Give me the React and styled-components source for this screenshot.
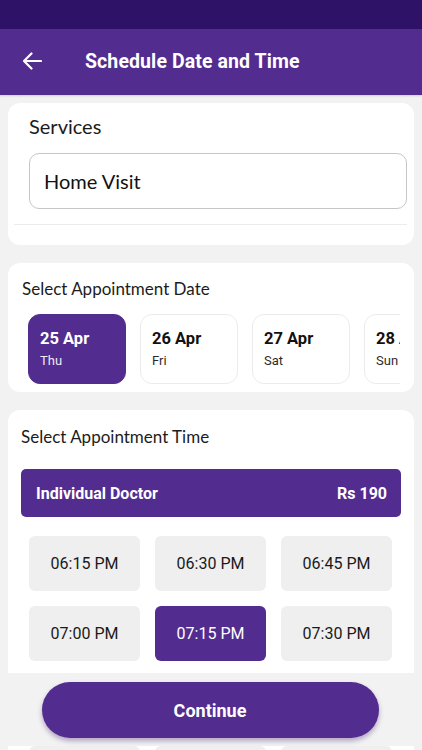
import React from "react";
import styled, { createGlobalStyle, css } from "styled-components";

const purple = "#522d8f";

const GlobalStyle = createGlobalStyle`
  * { box-sizing: border-box; }
  html, body { margin: 0; padding: 0; }
  body {
    background: #f2f2f2;
    font-family: Roboto, "Noto Sans", sans-serif;
    width: 422px;
    height: 750px;
    overflow: hidden;
  }
`;

const dates = [
  { day: "25 Apr", week: "Thu", active: true },
  { day: "26 Apr", week: "Fri" },
  { day: "27 Apr", week: "Sat" },
  { day: "28 Apr", week: "Sun" }
];

const slots = [
  "06:15 PM", "06:30 PM", "06:45 PM",
  "07:00 PM", "07:15 PM", "07:30 PM",
  "07:45 PM", "08:00 PM", "08:15 PM",
  "08:30 PM", "08:45 PM", "09:00 PM"
];

export default function App() {
  return (
    <>
      <GlobalStyle />
      <Screen>
        <StatusBar />
        <Header>
          <BackButton aria-label="back">
            <svg width="20" height="18" viewBox="0 0 20 18" fill="none">
              <path d="M19 9H2M9.5 1.5L2 9l7.5 7.5" stroke="#fff" strokeWidth="2.2" strokeLinecap="round" strokeLinejoin="round" />
            </svg>
          </BackButton>
          <HeaderTitle>Schedule Date and Time</HeaderTitle>
        </Header>

        <Content>
          <Card pad="services">
            <ServiceLabel>Services</ServiceLabel>
            <ServiceBox>Home Visit</ServiceBox>
            <Divider />
          </Card>

          <Card pad="date">
            <SectionTitle>Select Appointment Date</SectionTitle>
            <DateRow>
              {dates.map(d => (
                <DateChip key={d.day} active={d.active}>
                  <DateDay>{d.day}</DateDay>
                  <DateWeek>{d.week}</DateWeek>
                </DateChip>
              ))}
            </DateRow>
          </Card>

          <Card pad="time">
            <SectionTitle>Select Appointment Time</SectionTitle>
            <DoctorBar>
              <span>Individual Doctor</span>
              <span>Rs 190</span>
            </DoctorBar>
            <SlotGrid>
              {slots.map(s => (
                <Slot key={s} active={s === "07:15 PM"}>{s}</Slot>
              ))}
            </SlotGrid>
          </Card>
        </Content>

        <Footer>
          <ContinueButton>Continue</ContinueButton>
        </Footer>
      </Screen>
    </>
  );
}

const Screen = styled.div`
  position: relative;
  width: 422px;
  height: 750px;
  overflow: hidden;
  background: #f2f2f2;
`;

const StatusBar = styled.div`
  height: 29px;
  background: #2e1267;
`;

const Header = styled.div`
  height: 66px;
  background: ${purple};
  display: flex;
  align-items: center;
  padding-left: 22px;
  padding-bottom: 2px;
  box-shadow: 0 1px 2px rgba(0, 0, 0, 0.15);
`;

const BackButton = styled.div`
  width: 22px;
  display: flex;
  align-items: center;
  margin-right: 41px;
`;

const HeaderTitle = styled.h1`
  margin: 0;
  color: #fff;
  font-family: Roboto, Inter, sans-serif;
  font-weight: 700;
  font-size: 19.5px;
  letter-spacing: 0.1px;
`;

const Content = styled.div`
  display: flex;
  flex-direction: column;
  gap: 18px;
  padding: 8px 8px 0;
`;

const Card = styled.section`
  background: #fff;
  border-radius: 12px;
  ${props => props.pad === "services" && css`
    padding: 11px 7px 20px 21px;
    height: 142px;
  `}
  ${props => props.pad === "date" && css`
    padding: 15px 14px 7px 14px;
    height: 129px;
  `}
  ${props => props.pad === "time" && css`
    padding: 16px 13px 20px 13px;
    border-radius: 12px 12px 0 0;
  `}
`;

const ServiceLabel = styled.div`
  font-family: Lato, "Noto Sans", sans-serif;
  font-size: 20px;
  color: #1c1c1c;
  line-height: 24px;
`;

const ServiceBox = styled.div`
  margin-top: 15px;
  height: 56px;
  border: 1px solid #c6c6c6;
  border-radius: 10px;
  display: flex;
  align-items: center;
  padding-left: 14px;
  font-family: Lato, "Noto Sans", sans-serif;
  font-size: 20px;
  color: #111;
`;

const Divider = styled.div`
  margin: 15px 0 0 -15px;
  height: 1px;
  background: #ececec;
`;

const SectionTitle = styled.div`
  font-family: Lato, "Noto Sans", sans-serif;
  font-size: 17px;
  color: #1c1c1c;
  line-height: 22px;
`;

const DateRow = styled.div`
  display: flex;
  gap: 14px;
  margin-top: 14px;
  padding-left: 6px;
  overflow: hidden;
  width: 378px;
`;

const DateChip = styled.div`
  flex: 0 0 98px;
  height: 70px;
  border-radius: 12px;
  padding: 14px 11px;
  border: 1px solid ${props => (props.active ? purple : "#ececec")};
  background: ${props => (props.active ? purple : "#fff")};
  color: ${props => (props.active ? "#fff" : "#111")};
  font-family: Roboto, sans-serif;
`;

const DateDay = styled.div`
  font-weight: 700;
  font-size: 16.5px;
  line-height: 20px;
`;

const DateWeek = styled.div`
  font-size: 13px;
  margin-top: 4px;
  opacity: 0.9;
`;

const DoctorBar = styled.div`
  margin-top: 21px;
  height: 48px;
  border-radius: 5px;
  background: ${purple};
  color: #fff;
  display: flex;
  align-items: center;
  justify-content: space-between;
  padding: 0 14px 0 15px;
  font-family: Roboto, Inter, sans-serif;
  font-weight: 700;
  font-size: 16px;
`;

const SlotGrid = styled.div`
  display: grid;
  grid-template-columns: repeat(3, 111px);
  column-gap: 15px;
  row-gap: 15px;
  margin-top: 19px;
  padding-left: 8px;
`;

const Slot = styled.div`
  height: 55px;
  border-radius: 6px;
  background: ${props => (props.active ? purple : "#efefef")};
  color: ${props => (props.active ? "#fff" : "#1a1a1a")};
  display: flex;
  align-items: center;
  justify-content: center;
  font-family: Roboto, sans-serif;
  font-size: 16px;
`;

const Footer = styled.div`
  position: absolute;
  left: 0;
  right: 0;
  bottom: 4px;
  height: 73px;
  background: #f2f2f2;
  display: flex;
  justify-content: center;
  padding-top: 9px;
`;

const ContinueButton = styled.button`
  width: 337px;
  height: 56px;
  border: none;
  border-radius: 28px;
  background: ${purple};
  color: #fff;
  font-family: Roboto, Inter, sans-serif;
  font-weight: 700;
  font-size: 18px;
  margin-left: -2px;
  box-shadow: 0 3px 5px rgba(60, 20, 110, 0.35);
`;
